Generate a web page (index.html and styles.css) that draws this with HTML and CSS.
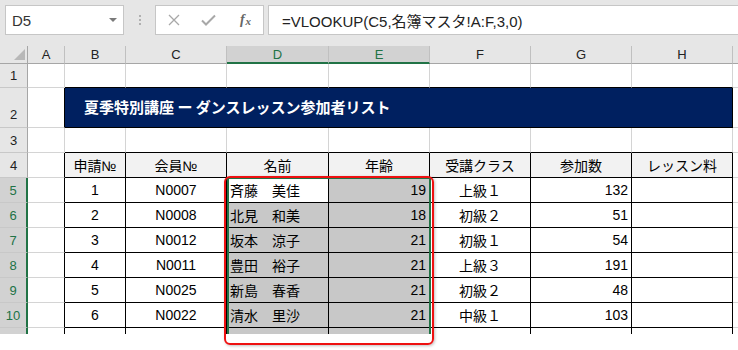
FILE: index.html
```html
<!DOCTYPE html>
<html lang="ja">
<head>
<meta charset="utf-8">
<title>夏季特別講座</title>
<link rel="stylesheet" href="styles.css">
</head>
<body>
<div class="app">
  <div class="topbar">
    <div class="namebox"><span class="nb-text">D5</span><span class="nb-arrow"></span></div>
    <div class="grip"><i></i><i></i><i></i></div>
    <div class="fbtns">
      <span class="slot"><svg width="12" height="12" viewBox="0 0 12 12"><path d="M1 1 L11 11 M11 1 L1 11" stroke="#a8a8a8" stroke-width="1.3" fill="none"/></svg></span>
      <span class="slot"><svg width="15" height="12" viewBox="0 0 15 12"><path d="M1 6.5 L5 10.5 L14 1.5" stroke="#a8a8a8" stroke-width="2" fill="none"/></svg></span>
      <span class="slot fx">f<span class="fx-x">x</span></span>
    </div>
    <div class="formula">=VLOOKUP(C5,名簿マスタ!A:F,3,0)</div>
  </div>
  <div class="sheetwrap">
    <div class="sheet">
      <div class="c corner"><span class="tri"></span></div>
      <div class="c ch">A</div>
      <div class="c ch">B</div>
      <div class="c ch">C</div>
      <div class="c ch sel">D</div>
      <div class="c ch sel">E</div>
      <div class="c ch">F</div>
      <div class="c ch">G</div>
      <div class="c ch">H</div>
      <div class="c ch last"></div>

      <div class="c rh">1</div>
      <div class="c"></div>
      <div class="c bt"></div><div class="c bt"></div><div class="c bt"></div><div class="c bt"></div><div class="c bt"></div><div class="c bt"></div><div class="c bt"></div>
      <div class="c"></div>

      <div class="c rh low">2</div>
      <div class="c br"></div>
      <div class="c title">夏季特別講座 ー ダンスレッスン参加者リスト</div>
      <div class="c"></div>

      <div class="c rh">3</div>
      <div class="c"></div>
      <div class="c bt"></div><div class="c bt"></div><div class="c bt"></div><div class="c bt"></div><div class="c bt"></div><div class="c bt"></div><div class="c bt"></div>
      <div class="c"></div>

      <div class="c rh">4</div>
      <div class="c br"></div>
      <div class="c tb th">申請№</div>
      <div class="c tb th">会員№</div>
      <div class="c tb th">名前</div>
      <div class="c tb th">年齢</div>
      <div class="c tb th">受講クラス</div>
      <div class="c tb th">参加数</div>
      <div class="c tb th">レッスン料</div>
      <div class="c"></div>

      <div class="c rh sel">5</div>
      <div class="c br"></div>
      <div class="c tb ctr">1</div>
      <div class="c tb ctr">N0007</div>
      <div class="c tb">斉藤　美佳</div>
      <div class="c tb rt fill">19</div>
      <div class="c tb ctr">上級１</div>
      <div class="c tb rt">132</div>
      <div class="c tb"></div>
      <div class="c"></div>

      <div class="c rh sel">6</div>
      <div class="c br"></div>
      <div class="c tb ctr">2</div>
      <div class="c tb ctr">N0008</div>
      <div class="c tb fill">北見　和美</div>
      <div class="c tb rt fill">18</div>
      <div class="c tb ctr">初級２</div>
      <div class="c tb rt">51</div>
      <div class="c tb"></div>
      <div class="c"></div>

      <div class="c rh sel">7</div>
      <div class="c br"></div>
      <div class="c tb ctr">3</div>
      <div class="c tb ctr">N0012</div>
      <div class="c tb fill">坂本　涼子</div>
      <div class="c tb rt fill">21</div>
      <div class="c tb ctr">初級１</div>
      <div class="c tb rt">54</div>
      <div class="c tb"></div>
      <div class="c"></div>

      <div class="c rh sel">8</div>
      <div class="c br"></div>
      <div class="c tb ctr">4</div>
      <div class="c tb ctr">N0011</div>
      <div class="c tb fill">豊田　裕子</div>
      <div class="c tb rt fill">21</div>
      <div class="c tb ctr">上級３</div>
      <div class="c tb rt">191</div>
      <div class="c tb"></div>
      <div class="c"></div>

      <div class="c rh sel">9</div>
      <div class="c br"></div>
      <div class="c tb ctr">5</div>
      <div class="c tb ctr">N0025</div>
      <div class="c tb fill">新島　春香</div>
      <div class="c tb rt fill">21</div>
      <div class="c tb ctr">初級２</div>
      <div class="c tb rt">48</div>
      <div class="c tb"></div>
      <div class="c"></div>

      <div class="c rh sel">10</div>
      <div class="c br"></div>
      <div class="c tb ctr">6</div>
      <div class="c tb ctr">N0022</div>
      <div class="c tb fill">清水　里沙</div>
      <div class="c tb rt fill">21</div>
      <div class="c tb ctr">中級１</div>
      <div class="c tb rt">103</div>
      <div class="c tb"></div>
      <div class="c"></div>

      <div class="c rh sel"></div>
      <div class="c br"></div>
      <div class="c tb ctr"></div>
      <div class="c tb ctr"></div>
      <div class="c tb fill"></div>
      <div class="c tb rt fill"></div>
      <div class="c tb ctr"></div>
      <div class="c tb rt"></div>
      <div class="c tb"></div>
      <div class="c"></div>

      <div class="selection"></div>
    </div>
    <div class="callout"></div>
  </div>
</div>
</body>
</html>
```
FILE: styles.css
```css
html, body {
  margin: 0;
  padding: 0;
  background: #ffffff;
}
body {
  width: 738px;
  height: 350px;
  overflow: hidden;
  font-family: "Liberation Sans", "Noto Sans CJK JP", sans-serif;
  color: #000;
}
.app {
  width: 738px;
}
.topbar {
  height: 46px;
  background: #e6e6e6;
  box-sizing: border-box;
  padding: 5px 0 0 5px;
  display: flex;
  align-items: flex-start;
  overflow: hidden;
}
.namebox {
  width: 119px;
  height: 30px;
  box-sizing: border-box;
  background: #fff;
  border: 1px solid #c6c6c6;
  display: flex;
  align-items: center;
  padding-left: 6px;
  padding-right: 6px;
}
.nb-text {
  font-size: 15px;
  color: #333;
  flex: 1;
  padding-top: 1px;
}
.nb-arrow {
  width: 0;
  height: 0;
  border-left: 4px solid transparent;
  border-right: 4px solid transparent;
  border-top: 4px solid #7a7a7a;
}
.grip {
  width: 31px;
  height: 30px;
  display: flex;
  flex-direction: column;
  align-items: center;
  justify-content: center;
  gap: 2px;
}
.grip i {
  display: block;
  width: 2px;
  height: 2px;
  background: #b0b0b0;
}
.fbtns {
  width: 109px;
  height: 30px;
  box-sizing: border-box;
  background: #fff;
  border: 1px solid #c6c6c6;
  display: flex;
  align-items: center;
  margin-right: 4px;
}
.slot {
  width: 36px;
  height: 28px;
  display: flex;
  align-items: center;
  justify-content: center;
}
.fx {
  font-family: "Liberation Serif", serif;
  font-style: italic;
  font-weight: bold;
  font-size: 14px;
  color: #666;
  padding-left: 2px;
}
.fx-x {
  font-size: 11px;
  margin-left: 1px;
  padding-top: 2px;
}
.formula {
  flex: 1;
  height: 30px;
  box-sizing: border-box;
  background: #fff;
  border: 1px solid #c6c6c6;
  border-right: none;
  display: flex;
  align-items: center;
  padding-left: 13px;
  font-size: 15px;
  color: #222;
  white-space: nowrap;
}
.sheetwrap {
  position: relative;
}
.sheet {
  position: relative;
  height: 288px;
  overflow: hidden;
  display: grid;
  grid-template-columns: 28px 37px 61px 101px 102px 101px 101px 101px 101px 1fr;
  grid-template-rows: 18px 24px 40px 25px repeat(8, 25px);
}
.c {
  box-sizing: border-box;
  border-right: 1px solid #d4d4d4;
  border-bottom: 1px solid #d4d4d4;
  display: flex;
  align-items: center;
  padding: 0 3px 1px 3px;
  font-size: 14px;
  white-space: nowrap;
  overflow: hidden;
  background: #fff;
}
.ch {
  background: #e6e6e6;
  border-right-color: #c0c0c0;
  border-bottom-color: #a6a6a6;
  justify-content: center;
  font-size: 13px;
  color: #222;
  padding: 0;
}
.ch.sel {
  background: #d2d2d2;
  color: #217346;
  border-bottom: 2px solid #217346;
}
.ch.last {
  border-right-color: #c0c0c0;
}
.corner {
  background: #e6e6e6;
  border-right-color: #a6a6a6;
  border-bottom-color: #a6a6a6;
  position: relative;
  padding: 0;
}
.tri {
  position: absolute;
  right: 2px;
  bottom: 3px;
  width: 0;
  height: 0;
  border-left: 11px solid transparent;
  border-bottom: 11px solid #b8b8b8;
}
.rh {
  background: #e6e6e6;
  border-right-color: #a6a6a6;
  border-bottom-color: #c8c8c8;
  justify-content: center;
  font-size: 13px;
  color: #222;
  padding: 0;
}
.rh.low {
  align-items: flex-end;
  padding-bottom: 5px;
}
.rh.sel {
  background: #d2d2d2;
  color: #217346;
  border-right: 2px solid #217346;
}
.bt {
  border-bottom-color: #000;
}
.br {
  border-right-color: #000;
}
.tb {
  border-right-color: #000;
  border-bottom-color: #000;
}
.th {
  background: #f2f2f2;
  justify-content: center;
}
.ctr {
  justify-content: center;
}
.rt {
  justify-content: flex-end;
}
.fill {
  background: #c8c8c8;
}
.title {
  grid-column: span 7;
  background: #002060;
  border-right-color: #000;
  border-bottom-color: #000;
  color: #fff;
  font-family: "Noto Sans CJK JP", sans-serif;
  font-weight: bold;
  font-size: 15px;
  padding: 0 0 3px 19px;
}
.selection {
  position: absolute;
  left: 227px;
  top: 131px;
  width: 204px;
  height: 220px;
  box-sizing: border-box;
  border: 2px solid #217346;
  pointer-events: none;
}
.callout {
  position: absolute;
  left: 224px;
  top: 130px;
  width: 210px;
  height: 169px;
  box-sizing: border-box;
  border: 2px solid #ee1111;
  border-radius: 6px;
  box-shadow: 1px 1px 3px rgba(0, 0, 0, 0.25);
  pointer-events: none;
}
```
